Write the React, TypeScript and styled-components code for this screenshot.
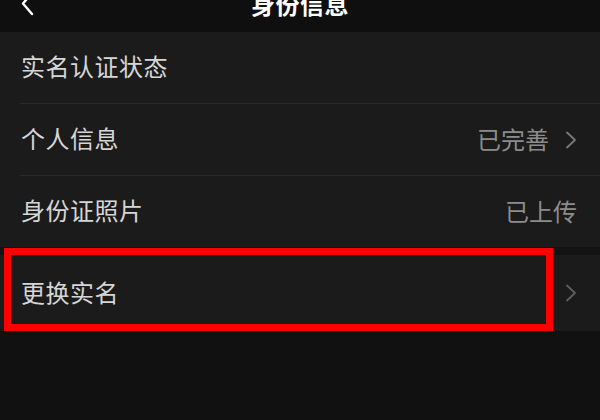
import React from 'react';
import styled, { createGlobalStyle } from 'styled-components';

const GlobalStyle = createGlobalStyle`
  html, body {
    margin: 0;
    padding: 0;
    background: #111111;
  }
  body {
    font-family: "Noto Sans CJK SC", "Noto Sans", sans-serif;
  }
`;

const Page = styled.div`
  width: 600px;
  height: 420px;
  overflow: hidden;
  background: #111111;
  display: flex;
  flex-direction: column;
`;

const Header = styled.div`
  position: relative;
  height: 32px;
  flex-shrink: 0;
  background: #0f0f0f;
  display: flex;
  justify-content: center;
  align-items: flex-start;
`;

const BackButton = styled.div`
  position: absolute;
  left: 20px;
  top: -9px;
  width: 16px;
  height: 26px;
`;

const Title = styled.div`
  margin-top: -10px;
  font-size: 24px;
  line-height: 28px;
  font-weight: 700;
  color: #ffffff;
  letter-spacing: 0.5px;
`;

const Section = styled.div`
  background: #1b1b1b;
  display: flex;
  flex-direction: column;
`;

const Row = styled.div<{ $tall?: boolean }>`
  position: relative;
  height: ${(p) => (p.$tall ? 76 : 71)}px;
  display: flex;
  align-items: center;
  justify-content: space-between;
  padding: 0 23px 0 21px;
  box-sizing: border-box;
  background: #1b1b1b;
`;

const Divider = styled.div`
  height: 1px;
  margin-left: 20px;
  background: #2a2a2a;
`;

const Label = styled.span`
  font-size: 24px;
  line-height: 30px;
  color: #d6d6d6;
  letter-spacing: 0.5px;
  margin-top: -3px;
`;

const Right = styled.div`
  display: flex;
  align-items: center;
  gap: 16px;
`;

const Value = styled.span`
  font-size: 24px;
  line-height: 30px;
  color: #8c8c8c;
  margin-top: -2px;
`;

const Gap = styled.div`
  height: 8px;
  background: #131313;
`;

const Highlight = styled.div`
  position: absolute;
  left: 4px;
  top: -7px;
  width: 549px;
  height: 83px;
  box-sizing: border-box;
  border: 7px solid #ff0000;
  pointer-events: none;
`;

const Chevron = ({ color = '#7a7a7a' }: { color?: string }) => (
  <svg width="12" height="18" viewBox="0 0 12 18" fill="none">
    <path d="M2 1.5 L10 9 L2 16.5" stroke={color} strokeWidth="1.8" strokeLinecap="round" strokeLinejoin="round" />
  </svg>
);

export default function App() {
  return (
    <Page>
      <GlobalStyle />
      <Header>
        <BackButton>
          <svg width="16" height="26" viewBox="0 0 16 26" fill="none">
            <path d="M12 2 L3 12.5 L12 23" stroke="#ffffff" strokeWidth="2.4" strokeLinecap="round" strokeLinejoin="round" />
          </svg>
        </BackButton>
        <Title>身份信息</Title>
      </Header>

      <Section>
        <Row>
          <Label>实名认证状态</Label>
        </Row>
        <Divider />
        <Row>
          <Label>个人信息</Label>
          <Right>
            <Value>已完善</Value>
            <Chevron />
          </Right>
        </Row>
        <Divider />
        <Row>
          <Label>身份证照片</Label>
          <Right>
            <Value>已上传</Value>
          </Right>
        </Row>
      </Section>

      <Gap />

      <Row $tall>
        <Label>更换实名</Label>
        <Right>
          <Chevron color="#5e5e5e" />
        </Right>
        <Highlight />
      </Row>
    </Page>
  );
}
